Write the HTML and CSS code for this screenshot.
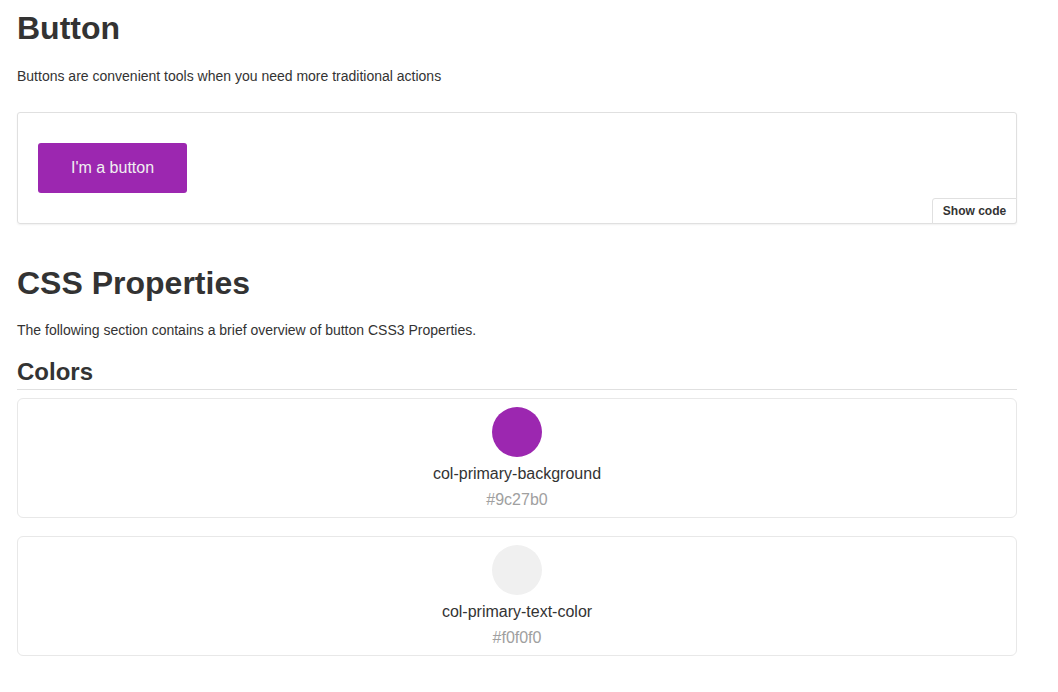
FILE: index.html
```html
<!DOCTYPE html>
<html lang="en">
<head>
<meta charset="utf-8">
<title>Button</title>
<link rel="stylesheet" href="styles.css">
</head>
<body>
<main class="page">
  <h1 class="title">Button</h1>
  <p class="lead">Buttons are convenient tools when you need more traditional actions</p>

  <section class="demo">
    <button class="btn" type="button">I'm a button</button>
    <span class="show-code">Show code</span>
  </section>

  <h1 class="title title-props">CSS Properties</h1>
  <p class="lead lead-props">The following section contains a brief overview of button CSS3 Properties.</p>

  <h2 class="subtitle">Colors</h2>

  <div class="swatches">
    <div class="swatch">
      <span class="dot dot-primary"></span>
      <span class="swatch-name">col-primary-background</span>
      <span class="swatch-hex">#9c27b0</span>
    </div>
    <div class="swatch">
      <span class="dot dot-text"></span>
      <span class="swatch-name">col-primary-text-color</span>
      <span class="swatch-hex">#f0f0f0</span>
    </div>
  </div>
</main>
</body>
</html>
```

FILE: styles.css
```css
* {
  box-sizing: border-box;
}

html, body {
  margin: 0;
  padding: 0;
  background: #ffffff;
}

body {
  font-family: "Liberation Sans", Arial, sans-serif;
  color: #333333;
}

.page {
  width: 1034px;
  padding: 0 17px 40px;
}

.title {
  margin: 10px 0 0;
  font-size: 32px;
  line-height: 36px;
  font-weight: 700;
}

.lead {
  margin: 20px 0 0;
  font-size: 14px;
  line-height: 20px;
}

.demo {
  position: relative;
  margin-top: 26px;
  padding: 30px 20px;
  border: 1px solid #e0e0e0;
  border-radius: 3px;
  box-shadow: 0 1px 2px rgba(0, 0, 0, 0.06);
}

.btn {
  display: block;
  height: 50px;
  padding: 0 33px;
  border: none;
  border-radius: 3px;
  background: #9c27b0;
  color: #f0f0f0;
  font-family: "Liberation Sans", Arial, sans-serif;
  font-size: 16px;
  line-height: 50px;
  cursor: pointer;
}

.show-code {
  position: absolute;
  right: -1px;
  bottom: -1px;
  width: 85px;
  height: 26px;
  border: 1px solid #e0e0e0;
  border-radius: 3px 0 3px 0;
  background: #ffffff;
  font-size: 12px;
  font-weight: 700;
  line-height: 24px;
  text-align: center;
  color: #333333;
}

.title-props {
  margin-top: 41px;
}

.lead-props {
  margin-top: 19px;
}

.subtitle {
  margin: 18px 0 0;
  padding-bottom: 3px;
  font-size: 24px;
  line-height: 28px;
  font-weight: 700;
  border-bottom: 1px solid #e0e0e0;
}

.swatches {
  display: flex;
  flex-direction: column;
  gap: 18px;
  margin-top: 8px;
}

.swatch {
  display: flex;
  flex-direction: column;
  align-items: center;
  height: 120px;
  padding: 8px 0 4px;
  border: 1px solid #e8e8e8;
  border-radius: 6px;
}

.dot {
  width: 50px;
  height: 50px;
  border-radius: 50%;
  margin-bottom: 4px;
}

.dot-primary {
  background: #9c27b0;
}

.dot-text {
  background: #f0f0f0;
}

.swatch-name {
  font-size: 16px;
  line-height: 26px;
  color: #333333;
}

.swatch-hex {
  font-size: 16px;
  line-height: 26px;
  color: #a0a0a0;
}
```
